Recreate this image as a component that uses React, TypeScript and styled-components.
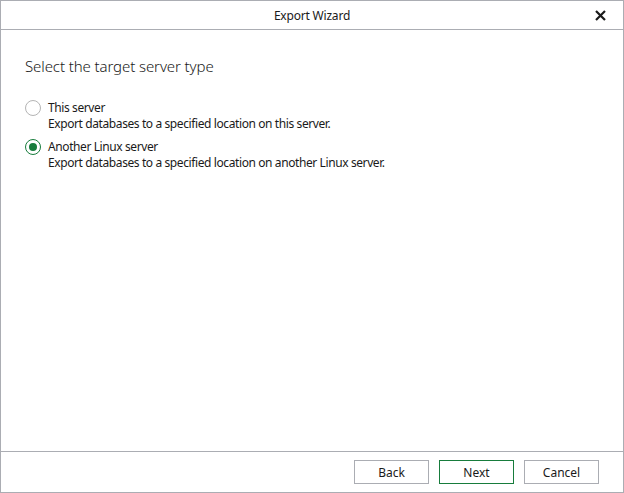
import React, { useState } from 'react'
import styled, { createGlobalStyle } from 'styled-components'

const GlobalStyle = createGlobalStyle`
  html, body {
    margin: 0;
    padding: 0;
    background: #ffffff;
  }
  body {
    font-family: 'Noto Sans', 'Open Sans', sans-serif;
    color: #1a1a1a;
  }
`

const Window = styled.div`
  box-sizing: border-box;
  width: 624px;
  height: 493px;
  border: 1px solid #abadb3;
  display: flex;
  flex-direction: column;
  background: #fff;
`

const TitleBar = styled.div`
  height: 28px;
  border-bottom: 1px solid #abadb3;
  display: flex;
  align-items: center;
  justify-content: center;
  position: relative;
  font-size: 12px;
  letter-spacing: -0.2px;
`

const CloseButton = styled.button`
  position: absolute;
  right: 16px;
  top: 7px;
  width: 14px;
  height: 14px;
  padding: 0;
  border: none;
  background: none;
  display: flex;
  align-items: center;
  justify-content: center;
  cursor: pointer;
`

const Body = styled.div`
  flex: 1;
  padding: 26px 24px 0 24px;
`

const Heading = styled.div`
  font-size: 15px;
  font-weight: 300;
  margin-bottom: 24px;
  letter-spacing: -0.1px;
`

const OptionList = styled.div`
  display: flex;
  flex-direction: column;
  gap: 7px;
`

const OptionRow = styled.label`
  display: flex;
  align-items: flex-start;
  gap: 7px;
  cursor: pointer;
`

const RadioCircle = styled.span<{ $checked: boolean }>`
  box-sizing: border-box;
  width: 16px;
  height: 16px;
  margin-top: 0;
  border-radius: 50%;
  border: 1px solid ${(p) => (p.$checked ? '#177c3c' : '#b4b4b4')};
  display: flex;
  align-items: center;
  justify-content: center;
  flex-shrink: 0;
  &::after {
    content: '';
    width: 8px;
    height: 8px;
    border-radius: 50%;
    background: ${(p) => (p.$checked ? '#177c3c' : 'transparent')};
  }
`

const OptionText = styled.div`
  display: flex;
  flex-direction: column;
  font-size: 12px;
  line-height: 16px;
  letter-spacing: -0.4px;
`

const Footer = styled.div`
  box-sizing: border-box;
  height: 41px;
  border-top: 1px solid #abadb3;
  display: flex;
  justify-content: flex-end;
  align-items: flex-start;
  gap: 10px;
  padding: 8px 24px 0 0;
`

const Button = styled.button<{ $primary?: boolean }>`
  box-sizing: border-box;
  width: 75px;
  height: 24px;
  background: #fff;
  border: 1px solid ${(p) => (p.$primary ? '#177c3c' : '#abadb3')};
  font-family: 'Noto Sans', 'Open Sans', sans-serif;
  font-size: 12px;
  color: #1a1a1a;
  padding: 0;
  cursor: pointer;
`

const options = [
  { title: 'This server', desc: 'Export databases to a specified location on this server.' },
  { title: 'Another Linux server', desc: 'Export databases to a specified location on another Linux server.' },
]

export default function App() {
  const [selected, setSelected] = useState(1)
  return (
    <>
      <GlobalStyle />
      <Window>
        <TitleBar>
          Export Wizard
          <CloseButton aria-label="Close">
            <svg width="11" height="11" viewBox="0 0 11 11">
              <path d="M1 1L10 10M10 1L1 10" stroke="#1a1a1a" strokeWidth="2.2" />
            </svg>
          </CloseButton>
        </TitleBar>
        <Body>
          <Heading>Select the target server type</Heading>
          <OptionList>
            {options.map((o, i) => (
              <OptionRow key={o.title} onClick={() => setSelected(i)}>
                <RadioCircle $checked={selected === i} />
                <OptionText>
                  <span>{o.title}</span>
                  <span>{o.desc}</span>
                </OptionText>
              </OptionRow>
            ))}
          </OptionList>
        </Body>
        <Footer>
          <Button>Back</Button>
          <Button $primary>Next</Button>
          <Button>Cancel</Button>
        </Footer>
      </Window>
    </>
  )
}
